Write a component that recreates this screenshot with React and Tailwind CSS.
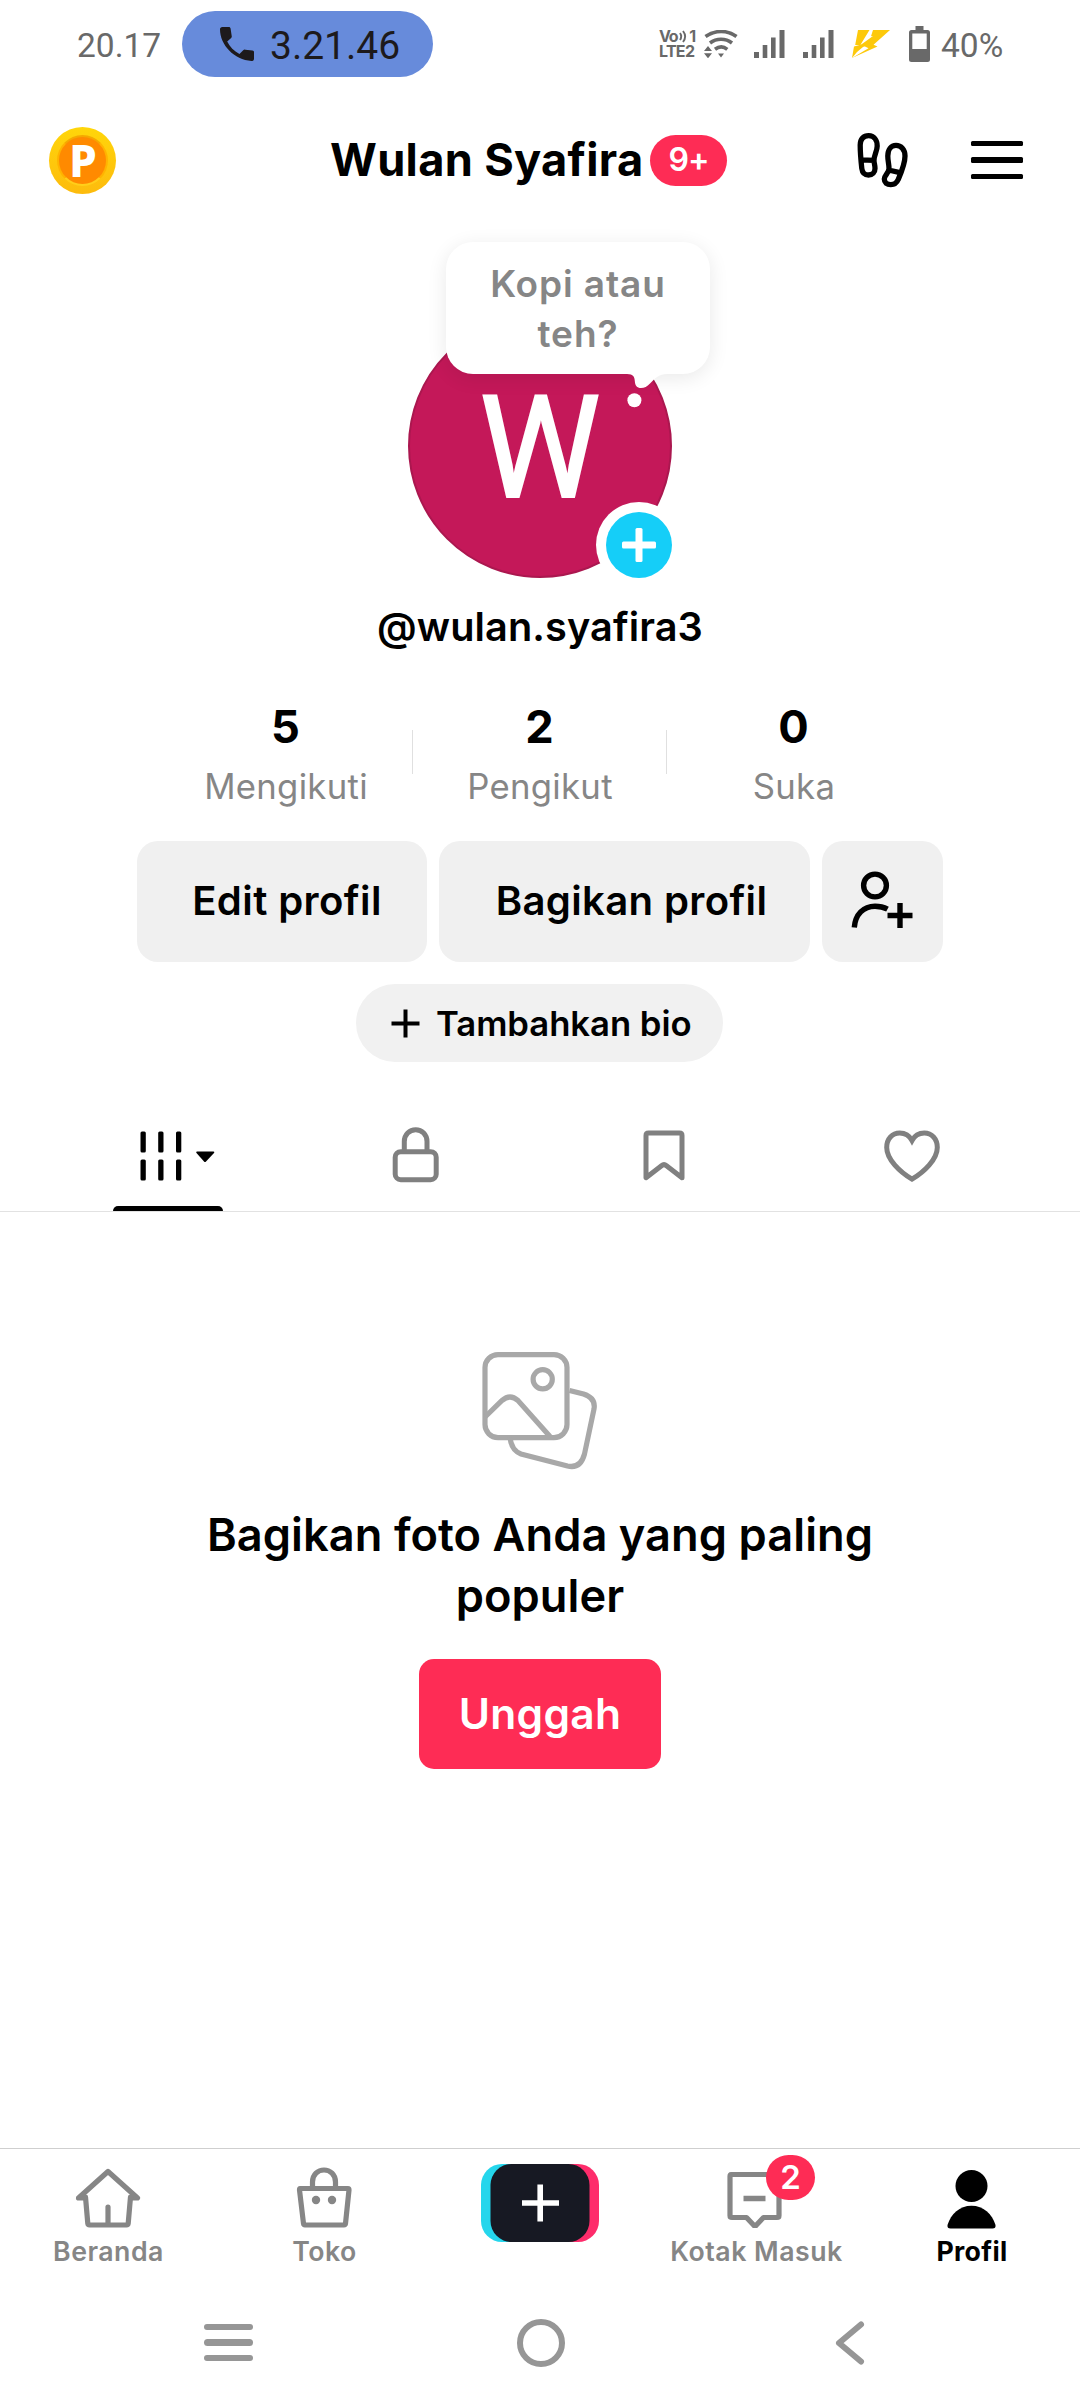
import React from 'react';

const stats = [
  { value: '5', label: 'Mengikuti' },
  { value: '2', label: 'Pengikut' },
  { value: '0', label: 'Suka' },
];

const PhoneIcon = () => (
  <svg width="34" height="34" viewBox="3 3 18 18" fill="#1d1a1c">
    <path d="M4.200 3h3.500c.5 0 .8.300.9.800l.6 4c.1.400 0 .700-.3 1L6.800 10.700c1.400 2.800 3.600 5.100 6.500 6.600l2-2c.3-.3.700-.4 1.100-.3l3.800.4c.5.1.8.400.8.900v3.500c0 .8-.5 1.300-1.300 1.200C10.500 20.400 3 12.500 3 4.200 3 3.500 3.500 3 4.200 3z" />
  </svg>
);

const SignalIcon = () => (
  <svg width="31" height="28" viewBox="0 0 31 28" fill="#696969">
    <rect x="0" y="22" width="5" height="6" />
    <rect x="8.700" y="15" width="4.600" height="13" />
    <rect x="17" y="7.500" width="4.600" height="20.500" />
    <rect x="25.500" y="0" width="5" height="28" />
  </svg>
);

const WifiIcon = () => (
  <svg width="34" height="28" viewBox="0 0 34 28">
    <g fill="none" stroke="#696969" strokeWidth="3.600">
      <path d="M1.500 6.500C11 -.2 23.500 -.2 32.500 6.500" />
      <path d="M6 13C12.500 8 21.500 8 28 13" />
      <path d="M11 19.300C15 16.300 19.500 16.300 23.300 19.300" />
    </g>
    <path d="M14 23.500h6l-3 4zM0 21l4-5 4 5zM0 23.300h8l-4 5z" fill="#696969" />
  </svg>
);

const StatusBar = () => (
  <div className="flex h-[88px] items-center pl-[77px] font-['Roboto'] text-[#696969]">
    <span className="w-[105px] pt-[3px] text-[33.500px] leading-none">20.17</span>
    <div className="flex h-[66px] w-[251px] items-center rounded-full bg-[#678bdb] pl-[38px]">
      <PhoneIcon />
      <span className="ml-[16px] pt-[4px] text-[39px] leading-none text-[#1d1a1c]">3.21.46</span>
    </div>
    <div className="ml-[226px] w-[37px] font-['Inter'] font-bold">
      <div className="flex h-[13px] w-[36px] items-center justify-between text-[16px] leading-[13px] tracking-[-1.2px]">
        <span>Vo</span>
        <svg width="8" height="13" viewBox="0 0 8 13" fill="none" stroke="#696969" strokeWidth="1.900">
          <path d="M1 3c1.500 2.200 1.500 4.800 0 7M4 1c2.700 3.500 2.700 7.500 0 11" />
        </svg>
        <span>1</span>
      </div>
      <div className="mt-[2px] h-[13px] text-[16px] leading-[13px] tracking-[-0.700px]">LTE2</div>
    </div>
    <div className="ml-[8px]"><WifiIcon /></div>
    <div className="ml-[16px]"><SignalIcon /></div>
    <div className="ml-[18px]"><SignalIcon /></div>
    <svg className="ml-[18px]" width="38" height="28" viewBox="0 0 38 28" fill="#fdc90b">
      <path d="M6 0h11.500L8.500 14.800l5.500-.2L5 22 0 28l2-11.500L7.500 15H3.200z" />
      <path d="M21 0h17L21.500 14.800 25.500 16.500 0 28l16.500-9.800L13 16.500H6.500L21 6l-2 .2z" />
    </svg>
    <svg className="ml-[19px]" width="21" height="36" viewBox="0 0 21 36">
      <path d="M6.500 0h8v4H18.500Q21 4 21 6.500V33.500Q21 36 18.500 36H2.500Q0 36 0 33.500V6.500Q0 4 2.500 4h4z" fill="#696969" />
      <rect x="3.300" y="7.500" width="14.400" height="15.500" fill="#fff" />
    </svg>
    <span className="ml-[11px] pt-[3px] text-[33.500px] leading-none">40%</span>
  </div>
);

const Header = () => (
  <div className="flex h-[144px] items-center pl-[49px]">
    <div className="flex h-[67px] w-[67px] items-center justify-center rounded-full bg-linear-to-b from-[#ffd60a] to-[#fdbb0d]">
      <div className="flex h-[51px] w-[51px] items-center justify-center rounded-full border-2 border-t-[#f5a800] border-r-[#ffb300] border-b-[#ffce1a] border-l-[#ffb300] bg-[#ff8a00] pl-[1px] font-['Noto_Sans'] text-[44px] leading-none font-extrabold text-white">
        P
      </div>
    </div>
    <h1 className="ml-[214px] w-[314px] text-[45.200px] leading-none font-bold tracking-[0.3px] whitespace-nowrap">Wulan Syafira</h1>
    <span className="ml-[6px] flex h-[51px] w-[77px] items-center justify-center rounded-full bg-[#fe2c55] text-[32px] font-semibold tracking-[-1px] text-white">9+</span>
    <svg className="ml-[123px]" width="70" height="70" viewBox="0 0 70 70" fill="none" stroke="#000" strokeWidth="5.300">
      <path d="M10.200 20C10.200 14 13.500 10.700 18.700 10.700S27.200 15 27.200 21C27.200 26 24 30 24 35.500 24 38 25 40 25 43.500 25 47.500 22.500 50 18.500 50S12.300 47.500 11.800 43.500C11.200 38 10.200 28 10.200 20ZM11.200 34.800L24 35.300" />
      <path d="M37.800 31C37.800 24.500 41 20.400 46 20.400S55 24.500 55 31C55 39 51 48 48.200 54.500 46.700 58 44.200 59.600 40.800 59.600 36.800 59.600 34.300 57.500 34.300 54 34.300 50.500 39 48 39 43.500 39 39 37.800 36 37.800 31ZM38.500 45L51 47.800" />
    </svg>
    <div className="ml-[51px] flex w-[52px] flex-col gap-[11px]">
      <span className="h-[5.500px] rounded-[1.500px] bg-black" />
      <span className="h-[5.500px] rounded-[1.500px] bg-black" />
      <span className="h-[5.500px] rounded-[1.500px] bg-black" />
    </div>
  </div>
);

const Avatar = () => (
  <div className="relative mx-auto mt-[82px] flex h-[264px] w-[264px] items-center justify-center rounded-full border-2 border-[#ab174f] bg-[#c41859]">
    <span className="scale-x-[0.96] pt-[6px] font-['Roboto'] text-[142px] leading-none text-white [-webkit-text-stroke:2px_white]">W</span>
    <div className="absolute top-[-74px] left-[36px] flex h-[132px] w-[264px] items-center justify-center rounded-[27px] bg-white pt-[2px] text-center text-[37px] leading-[50px] font-[560] tracking-[0.9px] text-[#868686] shadow-[0_4px_20px_rgba(0,0,0,0.09)]">
      <p>Kopi atau<br />teh?</p>
    </div>
    <svg className="absolute top-[57px] left-[216px]" width="46" height="36" viewBox="0 0 46 36" fill="#fff">
      <path d="M1 0v1C7.500 1 8.500 4 8.800 8 9 12.500 11 15 15 15 18.500 15 21 13.500 24 10.500 29 5.500 32 1 42 1V0z" />
      <circle cx="8.400" cy="27.300" r="7" />
    </svg>
    <div className="absolute top-[186px] left-[186px] flex h-[86px] w-[86px] items-center justify-center rounded-full bg-white">
      <div className="flex h-[66px] w-[66px] items-center justify-center rounded-full bg-[#15cef8]">
        <svg width="34" height="34" viewBox="0 0 34 34" fill="#fff">
          <rect x="0" y="13.500" width="34" height="7" rx="1.500" />
          <rect x="13.500" y="0" width="7" height="34" rx="1.500" />
        </svg>
      </div>
    </div>
  </div>
);

const Stats = () => (
  <div className="mx-auto mt-[48px] flex w-[762px]">
    {stats.map((s, i) => (
      <div key={s.label} className="flex w-[254px] items-start">
        <div className="w-[253px] text-center">
          <div className="text-[45.200px] leading-[53px] font-bold">{s.value}</div>
          <div className="pl-[1px] text-[34.700px] leading-[67px] tracking-[0.3px] text-[#868686]">{s.label}</div>
        </div>
        {i < 2 && <span className="mt-[30px] h-[44px] w-px bg-[#e0e0e0]" />}
      </div>
    ))}
  </div>
);

const Actions = () => (
  <>
    <div className="mt-[21px] flex justify-center gap-[12px] text-[40.100px] font-semibold whitespace-nowrap">
      <button className="h-[121px] w-[290px] rounded-[21px] bg-[#f0f0f0] pl-[10px] tracking-[0.4px]">Edit profil</button>
      <button className="h-[121px] w-[371px] rounded-[21px] bg-[#f0f0f0] pl-[14px] tracking-[0.35px]">Bagikan profil</button>
      <button className="flex h-[121px] w-[121px] items-center justify-center rounded-[21px] bg-[#f0f0f0] pr-[1px] pb-[3px]">
        <svg width="62" height="58" viewBox="0 0 62 58" fill="none" stroke="#000" strokeWidth="5.400">
          <circle cx="24" cy="14.500" r="11.400" />
          <path d="M3.300 56.500C4.300 43.500 12.500 35.200 24 35.200c4.700 0 8.800 1 12.500 3" strokeLinejoin="round" />
          <path d="M36.500 44.500h25M49 32v25" />
        </svg>
      </button>
    </div>
    <button className="mr-auto ml-[356px] mt-[22px] flex h-[78px] w-[367px] items-center rounded-full bg-[#f1f1f1] pl-[35px] text-[34.700px] font-semibold tracking-[-0.050px] whitespace-nowrap">
      <svg width="29" height="29" viewBox="0 0 29 29" stroke="#000" strokeWidth="4">
        <path d="M.5 14.500h28M14.500 .5v28" />
      </svg>
      <span className="ml-[16px]">Tambahkan bio</span>
    </button>
  </>
);

const Tabs = () => (
  <div className="mt-[37px] flex h-[113px] border-b border-[#e2e2e2] px-[44px]">
    <div className="flex w-[248px] flex-col items-center">
      <div className="flex h-[107px] items-center pt-[6px] pl-[19px]">
        <svg width="75" height="50" viewBox="0 0 75 50">
          <g fill="#000">
            <rect x="0.500" y="0.500" width="5.300" height="21" rx="1.500" />
            <rect x="18.200" y="0.500" width="5.300" height="21" rx="1.500" />
            <rect x="36" y="0.500" width="5.300" height="21" rx="1.500" />
            <rect x="0.500" y="28.500" width="5.300" height="21" rx="1.500" />
            <rect x="18.200" y="28.500" width="5.300" height="21" rx="1.500" />
            <rect x="36" y="28.500" width="5.300" height="21" rx="1.500" />
            <path d="M57 20.600h16.500q1.500 0 .5 1.500l-8 8.500q-1 1-2 0l-7.500-8.500q-1-1.500.5-1.500z" />
          </g>
        </svg>
      </div>
      <span className="h-[5px] w-[110px] rounded-t-[5px] bg-black" />
    </div>
    <div className="flex w-[248px] justify-center pt-[28px]">
      <svg width="48" height="56" viewBox="0 0 48 56" fill="none" stroke="#808080" strokeWidth="5">
        <rect x="3.200" y="24.700" width="41" height="28" rx="5.500" />
        <path d="M12.300 24.500V14.500C12.300 7.500 17.500 2.700 23.700 2.700S35 7.500 35 14.500v10" />
      </svg>
    </div>
    <div className="flex w-[248px] justify-center pt-[31px]">
      <svg width="42" height="52" viewBox="0 0 42 52" fill="none" stroke="#808080" strokeWidth="5" strokeLinejoin="round">
        <path d="M3 47.700V5.500q0-2.500 2.500-2.500h31q2.500 0 2.500 2.500v42.200L23.500 35.700q-2.500-2-5 0z" />
      </svg>
    </div>
    <div className="flex w-[248px] justify-center pt-[30px]">
      <svg width="58" height="54" viewBox="0 0 58 54" fill="none" stroke="#808080" strokeWidth="5">
        <path d="M29 50.200C17 43 3.700 30.500 3.700 18.500 3.700 9.800 9.300 4 16.700 4 22 4 26.500 6.800 29 11.500 31.500 6.800 36 4 41.300 4 48.700 4 54.300 9.800 54.300 18.500 54.300 30.500 41 43 29 50.200z" />
      </svg>
    </div>
  </div>
);

const EmptyState = () => (
  <div className="flex flex-1 flex-col items-center">
    <svg className="mt-[138px]" width="120" height="120" viewBox="0 0 120 120" fill="none" stroke="#a8a8a8" strokeWidth="5.200">
      <rect x="5" y="4.600" width="82" height="83" rx="13" />
      <circle cx="62.700" cy="29.300" r="9.600" />
      <path d="M5 67L22 50.500q8-7 16 0L70 86.500" />
      <path d="M89.500 40.500l14 3.600q12.500 4 10.500 15L104.500 104q-4 15-17 12L41 104q-9.500-3.500-11-16.500" />
    </svg>
    <h2 className="mt-[34px] w-[700px] text-center text-[45.200px] leading-[61px] font-[560] tracking-[0.050px]">
      Bagikan foto Anda yang paling populer
    </h2>
    <button className="mt-[33px] h-[110px] w-[242px] rounded-[15px] bg-[#fe2c55] text-[42.500px] font-semibold tracking-[0.3px] text-white">Unggah</button>
  </div>
);

const NavItem = ({ label, active, children }) => (
  <div className="flex w-[216px] flex-col items-center pt-[15px]">
    <div className="relative h-[64px] w-[70px]">{children}</div>
    <span className={active
      ? 'mt-[5px] text-[26.700px] leading-[36px] font-bold tracking-[0.3px] text-black'
      : 'mt-[5px] pl-[1px] text-[26.700px] leading-[36px] font-[560] tracking-[0.5px] whitespace-nowrap text-[#868686]'}>
      {label}
    </span>
  </div>
);

const BottomNav = () => (
  <div className="flex h-[137px] border-t border-[#cfcfcf]">
    <NavItem label="Beranda">
      <svg width="70" height="64" viewBox="0 0 70 64" fill="none" stroke="#868686" strokeWidth="5.200" strokeLinejoin="round" strokeLinecap="round">
        <path d="M12 34H5.500L35 7.500 64.500 34H58" />
        <path d="M12.500 33L14.800 59.500q.2 1.500 1.700 1.500h37q1.500 0 1.700-1.500L57.500 33M35 43v17" />
      </svg>
    </NavItem>
    <NavItem label="Toko">
      <svg width="70" height="64" viewBox="0 0 70 64" fill="none" stroke="#868686" strokeWidth="5.200" strokeLinejoin="round">
        <path d="M11 24.500h48q1 0 1 1.500l-3.500 33.500q-.2 1.500-1.500 1.500H16q-1.300 0-1.500-1.500L10.500 26q0-1.500.5-1.500z" />
        <path d="M23.500 23V18C23.500 10.500 29 6 35 6S46.500 10.500 46.500 18v5" />
        <circle cx="27" cy="36" r="4.200" fill="#868686" stroke="none" />
        <circle cx="43" cy="36" r="4.200" fill="#868686" stroke="none" />
      </svg>
    </NavItem>
    <div className="flex w-[216px] justify-center pt-[15px]">
      <svg width="118" height="78" viewBox="0 0 118 78">
        <rect x="0" y="0" width="60" height="78" rx="21" fill="#25d6ec" />
        <rect x="58" y="0" width="60" height="78" rx="21" fill="#fe2c6b" />
        <rect x="9.500" y="0" width="99" height="78" rx="21" fill="#171923" />
        <path d="M41 39h37M59.200 20.500v37" stroke="#fff" strokeWidth="5.600" />
      </svg>
    </div>
    <NavItem label="Kotak Masuk">
      <svg width="70" height="64" viewBox="0 0 70 64" fill="none" stroke="#868686" strokeWidth="5.200" strokeLinejoin="round">
        <path d="M10 10.500h46q2 0 2 2v39q0 2-2 2H42.500L34 62.500 25.500 53.500H11q-2 0-2-2V12.500q0-2 1-2z" />
        <path d="M22.500 34.500h22" strokeWidth="5.500" />
      </svg>
      <span className="absolute top-[-9px] left-[45px] flex h-[45px] w-[49px] items-center justify-center rounded-full bg-[#fe2c55] text-[33px] leading-none font-semibold text-white">2</span>
    </NavItem>
    <NavItem label="Profil" active>
      <svg width="70" height="65" viewBox="0 0 70 65" fill="#000">
        <circle cx="34.500" cy="22" r="16" />
        <path d="M13.500 64.500q-3.500 0-3-3.500C14 50 22.500 41.800 34.500 41.800S55 50 58.500 61q.5 3.500-3 3.500z" />
      </svg>
    </NavItem>
  </div>
);

const SystemBar = () => (
  <div className="flex h-[115px] items-center pl-[204px]">
    <div className="flex w-[49px] flex-col gap-[9.500px]">
      <span className="h-[6.300px] rounded-full bg-[#969696]" />
      <span className="h-[6.300px] rounded-full bg-[#969696]" />
      <span className="h-[6.300px] rounded-full bg-[#969696]" />
    </div>
    <span className="ml-[264px] h-[48px] w-[48px] rounded-full border-6 border-[#969696]" />
    <svg className="ml-[270px]" width="30" height="46" viewBox="0 0 30 46" fill="none" stroke="#969696" strokeWidth="6" strokeLinecap="round" strokeLinejoin="round">
      <path d="M26 4.500L4 23l22 18.500" />
    </svg>
  </div>
);

const App = () => {
  return (
    <div className="flex h-[2400px] w-[1080px] flex-col bg-white font-['Inter',sans-serif] text-black">
      <StatusBar />
      <Header />
      <Avatar />
      <p className="mt-[24px] text-center text-[39.700px] leading-[50px] font-[560] tracking-[0.1px]">@wulan.syafira3</p>
      <Stats />
      <Actions />
      <Tabs />
      <EmptyState />
      <BottomNav />
      <SystemBar />
    </div>
  );
};

export default App;
